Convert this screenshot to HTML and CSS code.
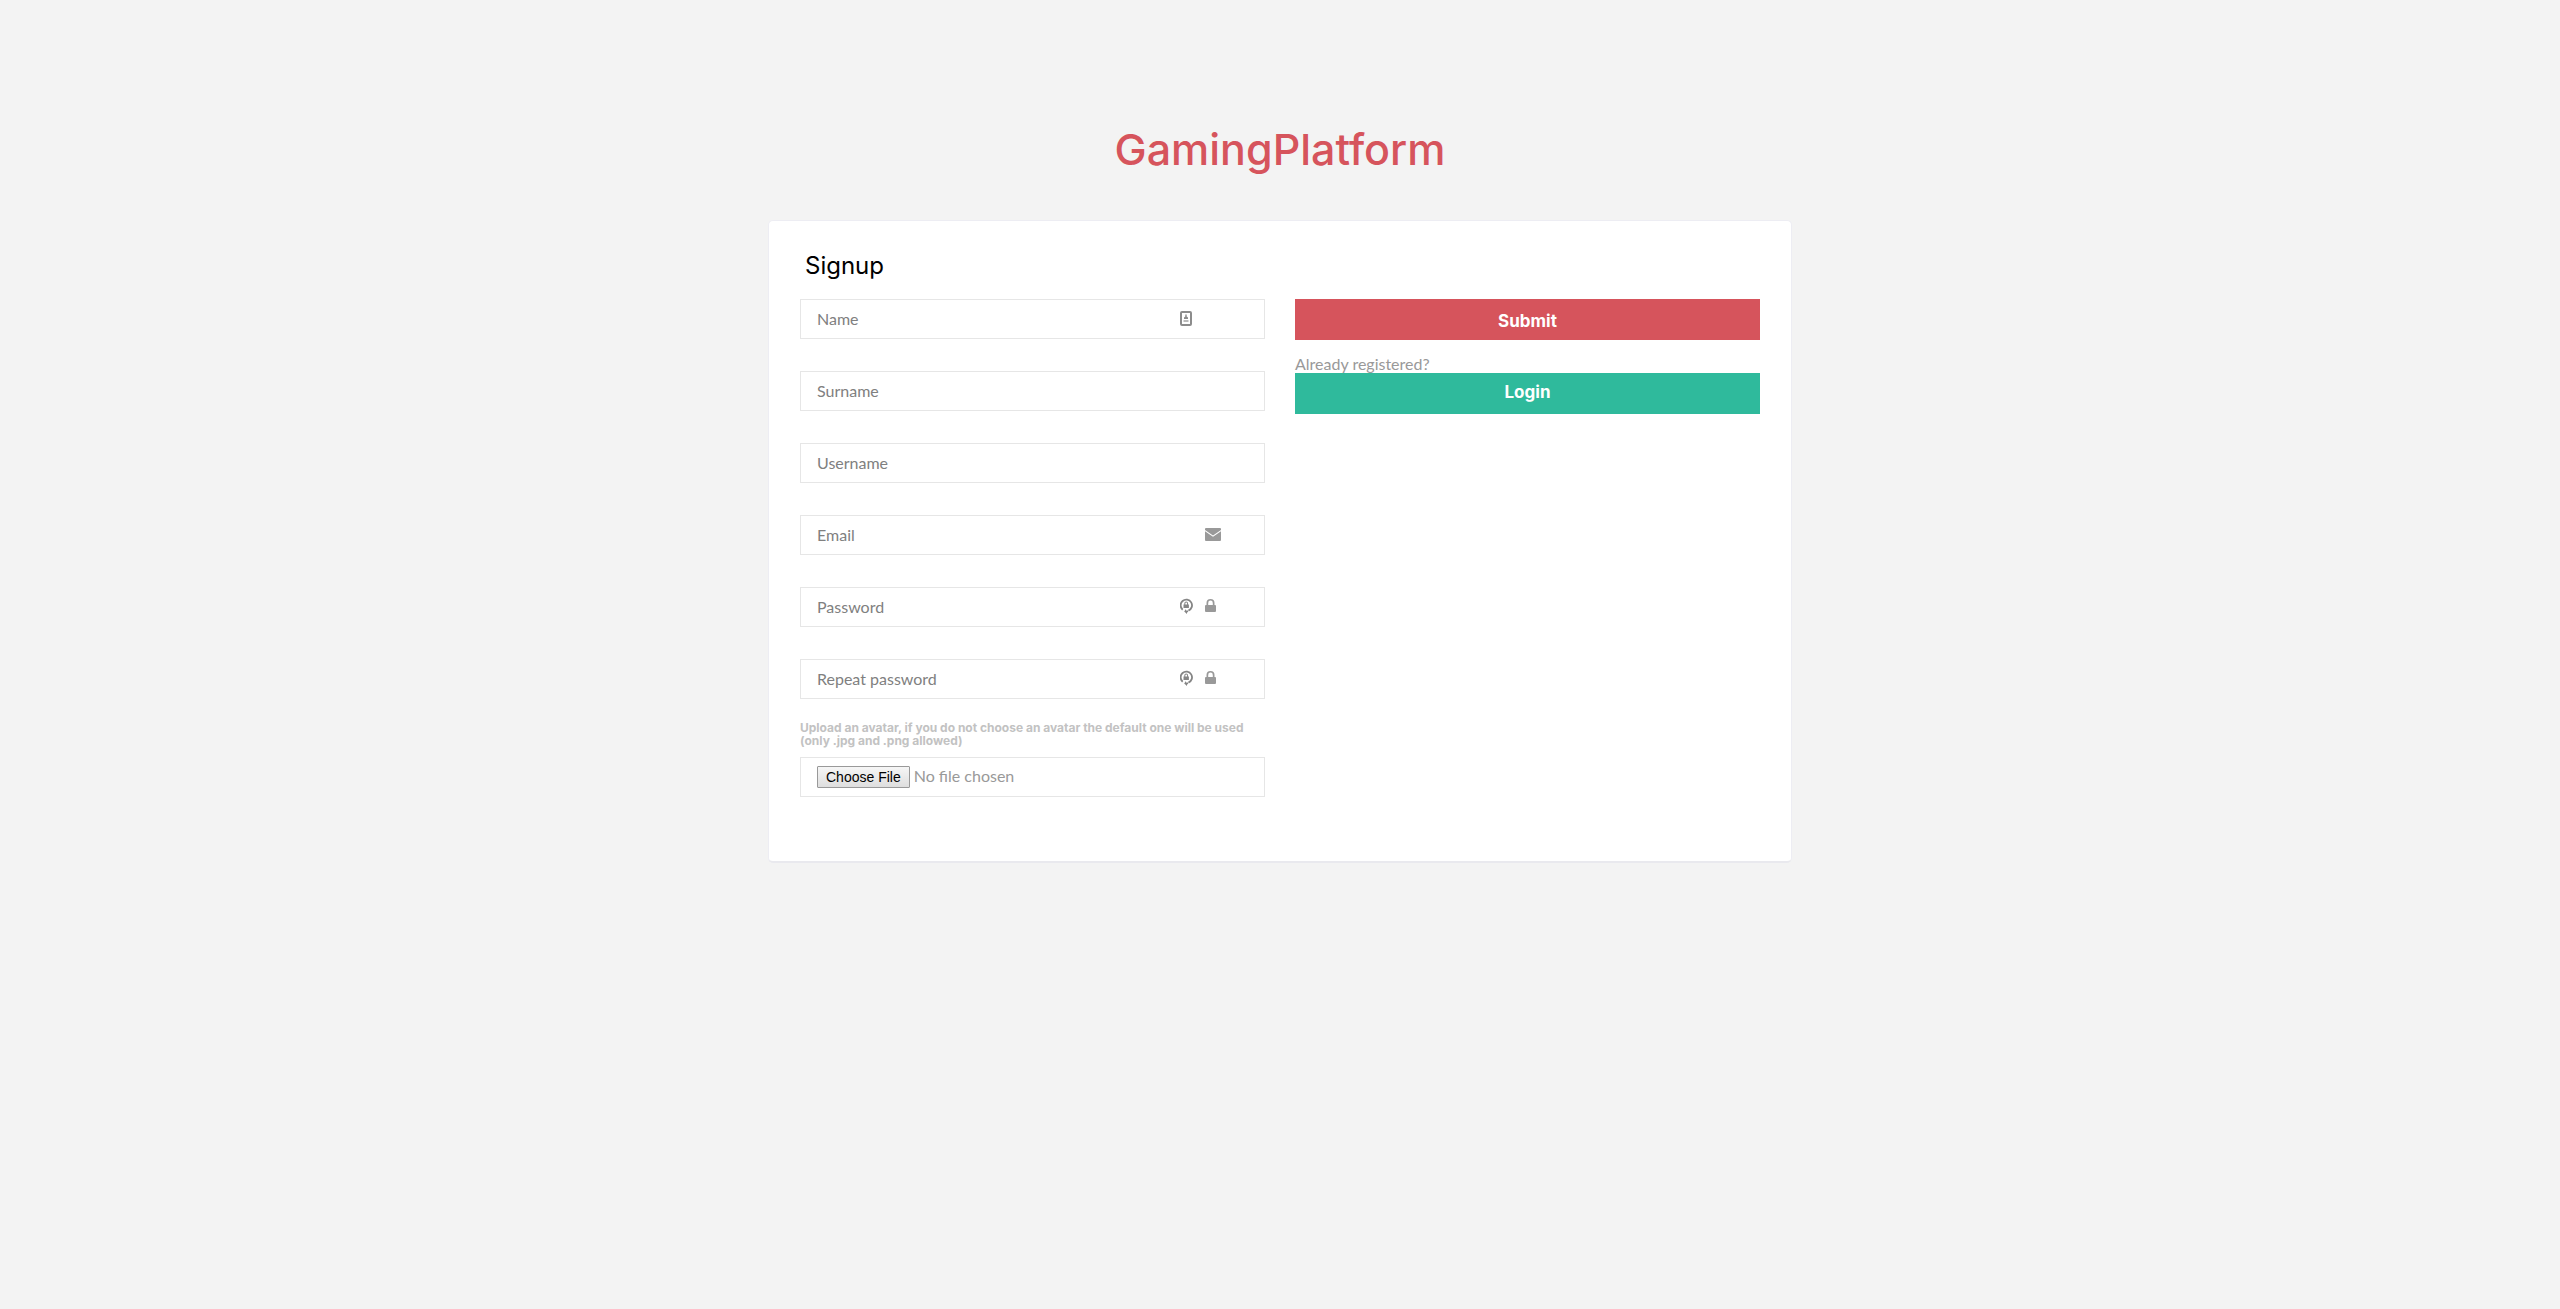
FILE: index.html
```html
<!DOCTYPE html>
<html lang="en">
<head>
<meta charset="utf-8">
<meta name="viewport" content="width=device-width, initial-scale=1">
<title>GamingPlatform - Signup</title>
<link rel="stylesheet" href="styles.css">
</head>
<body>
<main class="page">
  <h1 class="brand">GamingPlatform</h1>
  <form class="card">
    <h2 class="card-title">Signup</h2>
    <div class="columns">
      <div class="fields">
        <div class="field">
          <input class="input" type="text" placeholder="Name" aria-label="Name">
          <span class="icons">
            <svg class="icon" width="12" height="16" viewBox="0 0 12 16" fill="#8c8c8c"><rect x="1" y="2" width="10" height="13" rx="1" fill="none" stroke="#8c8c8c" stroke-width="2"/><path d="M5.300 4.500h1.400v2L8 7.500V9H4V7.500l1.300-1z"/><path d="M3.500 10h5v2h-5z" opacity=".6"/></svg>
          </span>
        </div>
        <div class="field"><input class="input" type="text" placeholder="Surname" aria-label="Surname"></div>
        <div class="field"><input class="input" type="text" placeholder="Username" aria-label="Username"></div>
        <div class="field">
          <input class="input" type="email" placeholder="Email" aria-label="Email">
          <span class="icons icons-single">
            <svg class="icon" width="16" height="16" viewBox="0 0 16 16" fill="#999"><path d="M1 2h14q1 0 1 1v1L8 9.500 0 4V3q0-1 1-1zM0 5.200l8 5.500 8-5.500V14q0 1-1 1H1q-1 0-1-1z"/></svg>
          </span>
        </div>
        <div class="field">
          <input class="input" type="password" placeholder="Password" aria-label="Password">
          <span class="icons">
            <svg class="icon" width="14" height="16" viewBox="0 0 14 16" fill="#858585"><path d="M2.700 11.700A5.700 5.700 0 1 1 8.400 12.600" fill="none" stroke="#858585" stroke-width="1.800"/><path d="M3.500 10V6.500h.8V5.400q0-1.900 1.900-1.900t1.900 1.900v1.100h.8V10zM5.300 6.500h1.800V5.400q0-.9-.9-.9t-.9.9zM6 11v1.500h2v1.800H7V16l-2.800-2.500z"/></svg>
            <svg class="icon" width="11" height="16" viewBox="0 0 11 16" fill="#999"><path d="M1 7h.5V5q0-4 4-4t4 4v2h.5q1 0 1 1v5q0 1-1 1H1q-1 0-1-1V8q0-1 1-1zm2.200 0h4.600V5q0-2.400-2.300-2.400T3.200 5z"/></svg>
          </span>
        </div>
        <div class="field">
          <input class="input" type="password" placeholder="Repeat password" aria-label="Repeat password">
          <span class="icons">
            <svg class="icon" width="14" height="16" viewBox="0 0 14 16" fill="#858585"><path d="M2.700 11.700A5.700 5.700 0 1 1 8.400 12.600" fill="none" stroke="#858585" stroke-width="1.800"/><path d="M3.500 10V6.500h.8V5.400q0-1.900 1.900-1.900t1.900 1.900v1.100h.8V10zM5.300 6.500h1.800V5.400q0-.9-.9-.9t-.9.9zM6 11v1.500h2v1.800H7V16l-2.800-2.500z"/></svg>
            <svg class="icon" width="11" height="16" viewBox="0 0 11 16" fill="#999"><path d="M1 7h.5V5q0-4 4-4t4 4v2h.5q1 0 1 1v5q0 1-1 1H1q-1 0-1-1V8q0-1 1-1zm2.200 0h4.600V5q0-2.400-2.300-2.400T3.200 5z"/></svg>
          </span>
        </div>
        <div class="upload">
          <label class="hint" for="avatar">Upload an avatar, if you do not choose an avatar the default one will be used (only .jpg and .png allowed)</label>
          <input class="input input-file" type="file" id="avatar" accept=".jpg,.png">
        </div>
      </div>
      <div class="actions">
        <button class="button button-submit" type="submit">Submit</button>
        <p class="note">Already registered?</p>
        <a class="button button-login" href="#login">Login</a>
      </div>
    </div>
  </form>
</main>
</body>
</html>
```
FILE: styles.css
```css
* {
  box-sizing: border-box;
}

body {
  margin: 0;
  background: #f3f3f3;
  color: #999;
  font-family: Lato, sans-serif;
  font-size: 16px;
}

.page {
  padding: 124px 16px 48px;
}

.brand {
  margin: 0 0 46px;
  color: #d6545c;
  font-family: Inter, sans-serif;
  font-size: 43px;
  font-weight: 500;
  line-height: 50px;
  text-align: center;
}

.card {
  width: 1024px;
  max-width: 100%;
  margin: 0 auto;
  padding: 28px 31px 64px;
  background: #fff;
  border: 1px solid #ededf3;
  border-bottom: 2px solid #e9e9ee;
  border-radius: 5px;
}

.card-title {
  margin: 0 0 16px;
  padding-left: 5px;
  color: #000;
  font-family: Inter, sans-serif;
  font-size: 24px;
  font-weight: 400;
  line-height: 34px;
}

.columns {
  display: grid;
  grid-template-columns: 1fr 1fr;
  gap: 30px;
}

.fields {
  display: flex;
  flex-direction: column;
  gap: 32px;
}

.field {
  position: relative;
}

.input {
  display: block;
  width: 100%;
  height: 40px;
  padding: 0 16px 2px;
  background: #fff;
  border: 1px solid #e6e6e6;
  border-radius: 0;
  color: #999;
  font-family: Lato, sans-serif;
  font-size: 16px;
}

.input::placeholder {
  color: #808080;
  opacity: 1;
}

.icons {
  position: absolute;
  top: 11px;
  left: 380px;
  display: flex;
  gap: 11px;
  pointer-events: none;
}

.icons-single {
  left: 405px;
}

.icon {
  display: block;
}

.upload {
  margin-top: -10px;
}

.hint {
  display: block;
  margin-bottom: 10px;
  color: #c2c2c2;
  font-family: Inter, sans-serif;
  font-size: 12px;
  font-weight: 700;
  line-height: 13px;
}

.input-file {
  padding: 8px 16px;
  line-height: 20px;
}

.input-file::file-selector-button {
  height: 22px;
  margin: 0 4px 0 0;
  padding: 0 8px;
  background: linear-gradient(#f6f6f6, #dedede);
  border: 1px solid #999;
  border-radius: 1px;
  color: #000;
  font-family: "Liberation Sans", sans-serif;
  font-size: 14px;
}

.button {
  display: block;
  width: 100%;
  height: 41px;
  padding: 0;
  border: 0;
  color: #fff;
  font-family: Inter, sans-serif;
  font-size: 17px;
  font-weight: 700;
  line-height: 38px;
  text-align: center;
  text-decoration: none;
}

.button-submit {
  padding-top: 2px;
  background: #d6545c;
}

.button-login {
  background: #2fba9c;
}

.note {
  margin: 14px 0 0;
  line-height: 19px;
}

@media (max-width: 800px) {
  .columns {
    grid-template-columns: 1fr;
  }

  .icons {
    right: 40px;
    left: auto;
  }
}
```
